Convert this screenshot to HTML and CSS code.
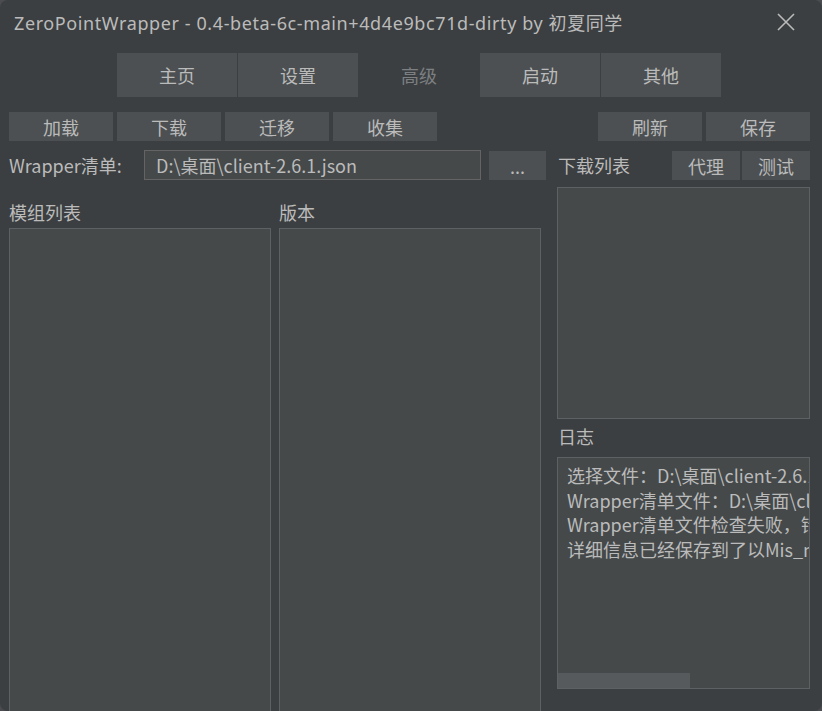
FILE: index.html
```html
<!DOCTYPE html>
<html lang="zh-CN">
<head>
<meta charset="utf-8">
<title>ZeroPointWrapper</title>
<link rel="stylesheet" href="styles.css">
</head>
<body>
<div class="window">
  <div class="titlebar">
    <span class="title">ZeroPointWrapper - 0.4-beta-6c-main+4d4e9bc71d-dirty by 初夏同学</span>
    <svg class="close" width="18" height="18" viewBox="0 0 18 18"><path d="M1 1 L17 17 M17 1 L1 17" stroke="#bbbbbb" stroke-width="1.6" fill="none"/></svg>
  </div>
  <div class="tabs">
    <div class="tab">主页</div>
    <div class="tab">设置</div>
    <div class="tab tab-active">高级</div>
    <div class="tab">启动</div>
    <div class="tab">其他</div>
  </div>
  <div class="toolbar">
    <div class="btn btn-wide">加载</div>
    <div class="btn btn-wide">下载</div>
    <div class="btn btn-wide">迁移</div>
    <div class="btn btn-wide">收集</div>
    <div class="spacer"></div>
    <div class="btn btn-wide">刷新</div>
    <div class="btn btn-wide">保存</div>
  </div>
  <div class="main">
    <div class="left">
      <div class="pathrow">
        <span class="label label-path">Wrapper清单:</span>
        <div class="field">D:\桌面\client-2.6.1.json</div>
        <div class="btn btn-dots">...</div>
      </div>
      <div class="cols">
        <div class="col">
          <div class="label col-label">模组列表</div>
          <div class="box col-box"></div>
        </div>
        <div class="col">
          <div class="label col-label">版本</div>
          <div class="box col-box"></div>
        </div>
      </div>
    </div>
    <div class="right">
      <div class="righthead">
        <span class="label">下载列表</span>
        <div class="spacer"></div>
        <div class="btn btn-small">代理</div>
        <div class="btn btn-small">测试</div>
      </div>
      <div class="box dlbox"></div>
      <div class="label log-label">日志</div>
      <div class="box logbox">
        <div class="logtext">
          <div>选择文件：D:\桌面\client-2.6.1.json</div>
          <div>Wrapper清单文件：D:\桌面\client-2.6.1.json</div>
          <div>Wrapper清单文件检查失败，错误信息如下</div>
          <div>详细信息已经保存到了以Mis_modlist为名的文件中</div>
        </div>
        <div class="hscroll"><div class="thumb"></div></div>
      </div>
    </div>
  </div>
</div>
</body>
</html>
```
FILE: styles.css
```css
* { box-sizing: border-box; }
html, body { margin: 0; padding: 0; }
body {
  width: 822px;
  height: 711px;
  background: #4a4c4f;
  overflow: hidden;
  font-family: "Noto Sans CJK SC", "Noto Sans", sans-serif;
  color: #bbbbbb;
}
.window {
  width: 822px;
  height: 711px;
  background: #3c3f41;
  border-radius: 8px;
  overflow: hidden;
  display: flex;
  flex-direction: column;
}
.titlebar {
  height: 44px;
  display: flex;
  align-items: center;
  padding-left: 14px;
  padding-right: 27px;
  flex-shrink: 0;
}
.title {
  font-family: "Noto Sans", "Noto Sans CJK SC", sans-serif;
  font-size: 18px;
  letter-spacing: 0.6px;
  white-space: nowrap;
  flex: 1;
}
.close { display: block; }
.tabs {
  margin-top: 9px;
  padding-left: 117px;
  display: flex;
  gap: 1px;
  flex-shrink: 0;
}
.tab {
  width: 120px;
  height: 44px;
  background: #4c5052;
  display: flex;
  align-items: center;
  justify-content: center;
  font-size: 18px;
  padding-bottom: 1px;
}
.tab-active {
  background: transparent;
  color: #7d8083;
}
.toolbar {
  margin-top: 15px;
  padding: 0 12px 0 9px;
  display: flex;
  gap: 4px;
  height: 29px;
  flex-shrink: 0;
}
.spacer { flex: 1; }
.btn {
  background: #4c5052;
  display: flex;
  align-items: center;
  justify-content: center;
  font-size: 18px;
  height: 29px;
  flex-shrink: 0;
}
.btn-wide { width: 104px; }
.main {
  margin-top: 9px;
  padding: 0 12px 0 9px;
  display: flex;
  gap: 16px;
  flex: 1;
  min-height: 0;
}
.left {
  width: 532px;
  flex-shrink: 0;
  display: flex;
  flex-direction: column;
}
.pathrow {
  height: 30px;
  display: flex;
  align-items: center;
}
.label {
  font-size: 18px;
  line-height: 24px;
  white-space: nowrap;
}
.label-path { width: 135px; flex-shrink: 0; }
.field {
  width: 337px;
  flex-shrink: 0;
  height: 30px;
  border: 1px solid #646464;
  background: #45494a;
  font-size: 18px;
  display: flex;
  align-items: center;
  padding-left: 11px;
}
.btn-dots {
  margin-left: 8px;
  width: 57px;
  margin-top: 1px;
}
.cols {
  display: flex;
  gap: 8px;
  flex: 1;
  min-height: 0;
  margin-top: 20px;
}
.col {
  width: 262px;
  display: flex;
  flex-direction: column;
}
.col-label { margin-bottom: 4px; }
.box {
  background: #45494a;
  border: 1px solid #5e6163;
}
.col-box { flex: 1; margin-bottom: -4px; }
.right {
  width: 253px;
  flex-shrink: 0;
  display: flex;
  flex-direction: column;
}
.righthead {
  height: 30px;
  display: flex;
  align-items: center;
  padding-left: 1px;
}
.btn-small {
  width: 68px;
  margin-top: 1px;
}
.btn-small + .btn-small { margin-left: 2px; }
.dlbox {
  margin-top: 7px;
  height: 232px;
}
.log-label {
  margin-top: 5px;
  padding-left: 1px;
}
.logbox {
  margin-top: 9px;
  height: 232px;
  display: flex;
  flex-direction: column;
  overflow: hidden;
}
.logtext {
  flex: 1;
  overflow: hidden;
  white-space: nowrap;
  padding: 5px 0 0 9px;
  font-size: 18px;
  line-height: 24.6px;
}
.hscroll {
  height: 15px;
  flex-shrink: 0;
}
.thumb {
  width: 132px;
  height: 15px;
  background: #565a5d;
}
```
